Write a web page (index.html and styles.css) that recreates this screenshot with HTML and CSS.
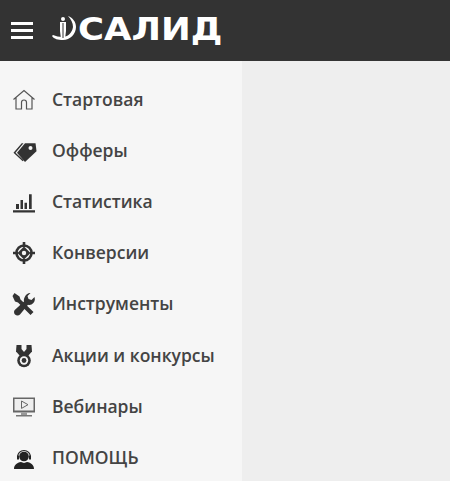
FILE: index.html
```html
<!DOCTYPE html>
<html>
<head>
<meta charset="utf-8">
<title>Салид</title>
<link rel="stylesheet" href="styles.css">
</head>
<body>
<div class="header">
  <a class="burger"><span></span><span></span><span></span></a>
  <div class="logo">
    <svg class="logoMark" width="27" height="28" viewBox="0 0 27 28">
      <path d="M17 1c5 2 8 6 8 11 0 7-6 13-13 13-5 0-9-1-11-4l1-1c3 1 6 2 9 2 6 0 10-4 11-10 0-4-2-8-5-11z" fill="#fff"/>
      <circle cx="12" cy="4" r="2" fill="#fff"/>
      <path d="M9 7h6v9l-1 8h-4l-1-8z" fill="#fff"/>
      <path d="M11.500 8h1v15h-1z" fill="#333"/>
    </svg>
    <span class="logoText">САЛИД</span>
  </div>
</div>
<div class="wrap">
  <ul class="menu">
    <li>
      <svg width="24" height="24" viewBox="0 0 24 24" fill="none" stroke="#555" stroke-width="1.200"><path d="M1.500 11.500 12 2.500l10.500 9M4 9.500V21h5.500v-6.500a2.500 2.500 0 0 1 5 0V21H20V9.500"/></svg>
      <span>Стартовая</span>
    </li>
    <li>
      <svg width="24" height="24" viewBox="0 0 24 24"><path d="M5 13.700 13 4.300h10.500l1 8-11.500 10.700z" fill="#333"/><path d="M1.500 13.700 9.700 4.300h1.800l-8 9.400 8.200 7.600-1 1z" fill="#333"/><circle cx="18.500" cy="9" r="2" fill="#f6f6f6"/></svg>
      <span>Офферы</span>
    </li>
    <li>
      <svg width="24" height="24" viewBox="0 0 24 24" fill="#333"><path d="M1 20.300h22v2.200H1zM4 14h3v5H4zM8.500 10H11v9H8.500zM12.500 12.700H15V19h-2.500zM17 4.300h2.700V19H17z"/></svg>
      <span>Статистика</span>
    </li>
    <li>
      <svg width="24" height="24" viewBox="0 0 24 24" fill="none" stroke="#333" stroke-width="2.600"><circle cx="12" cy="12" r="7.500"/><path d="M12 1v5M12 18v5M1 12h5M18 12h5"/><path d="M12 5.500l6.500 6.500-6.500 6.500L5.500 12z" fill="#333" stroke="none"/><circle cx="12" cy="12" r="2.200" fill="#f6f6f6" stroke="none"/></svg>
      <span>Конверсии</span>
    </li>
    <li>
      <svg width="24" height="24" viewBox="0 0 24 24" fill="#333"><path d="M2.500 1 7.500 4.500l1 3 13 12.500-3 3L6 10.500l-3-1L.5 4z"/><path d="M18.500 1l-3 3 1 3 3 1 3-3c1 3 0 6-3 7.500-1.500.7-2.700.5-3.500.2L8 22.500c-1.500 1.500-3.800 1-5 0-1.200-1.200-1.400-3.500 0-4.700l9-8.300c-.3-1.500-.2-3 1-5 1.300-2.500 3.500-3.800 5.500-3.500z"/></svg>
      <span>Инструменты</span>
    </li>
    <li>
      <svg width="24" height="24" viewBox="0 0 24 24"><path d="M4.500 1h15l.5 6.500-4.500 5h-7L4 7.500z" fill="#333"/><path d="M9.500 1h5v4l-2.500 3-2.500-3z" fill="#f6f6f6"/><circle cx="12" cy="16.500" r="6.800" fill="#333"/><circle cx="12" cy="16.500" r="4.200" fill="#f6f6f6"/><circle cx="12" cy="16.500" r="2.400" fill="#333"/></svg>
      <span>Акции и конкурсы</span>
    </li>
    <li>
      <svg width="24" height="24" viewBox="0 0 24 24"><rect x="1" y="2.500" width="22" height="15" fill="#666"/><rect x="2.500" y="4" width="19" height="11.500" fill="#eee"/><path d="M9.500 6l6.500 3.700-6.500 3.700z" fill="none" stroke="#666"/><path d="M9 17.500h6v2.500H9z" fill="#999"/><rect x="4" y="20" width="16" height="1.500" fill="#777"/></svg>
      <span>Вебинары</span>
    </li>
    <li>
      <svg width="24" height="24" viewBox="0 0 24 24"><path d="M5.500 11a6.500 6.500 0 0 1 13 0" fill="none" stroke="#222" stroke-width="1.200"/><circle cx="12" cy="10.500" r="4.800" fill="#222"/><rect x="5" y="9.500" width="2" height="4" fill="#222"/><rect x="17" y="9.500" width="2" height="4" fill="#222"/><path d="M2 23c0-4 3-6.500 7-7l3 1 3-1c4 .5 7 3 7 7z" fill="#222"/></svg>
      <span>ПОМОЩЬ</span>
    </li>
  </ul>
  <div class="content"></div>
</div>
</body>
</html>
```
FILE: styles.css
```css
html,body{ margin:0; padding:0; height:100%; overflow:hidden;}
body{ font-family:"Open Sans","Liberation Sans",sans-serif; background:#eee;}
ul,li{ margin:0; padding:0; list-style:none;}
.header{ height:61px; background:#333; display:flex; align-items:center; padding-left:11px;}
.burger{ display:flex; flex-direction:column; gap:4px; width:22px; margin-top:-1px;}
.burger span{ display:block; height:3px; background:#fff;}
.logo{ display:flex; align-items:center; margin-left:18px; margin-top:-3px;}
.logoMark{ display:block;}
.logoText{ font-family:"DejaVu Sans",sans-serif; font-weight:bold; font-size:32px; line-height:32px; color:#fff; margin-left:0; transform:scaleX(1.11); transform-origin:left center;}
.wrap{ display:flex; height:420px;}
.menu{ width:242px; background:#f6f6f6; padding-top:13px; box-sizing:border-box;}
.menu li{ display:flex; align-items:center; height:51.2px; padding-left:12px;}
.menu svg{ flex:none; display:block; overflow:visible;}
.menu span{ margin:-2px 0 0 16px; font-size:17.5px; font-weight:600; color:#444; white-space:nowrap;}
.content{ flex:1; background:#eee;}
```
